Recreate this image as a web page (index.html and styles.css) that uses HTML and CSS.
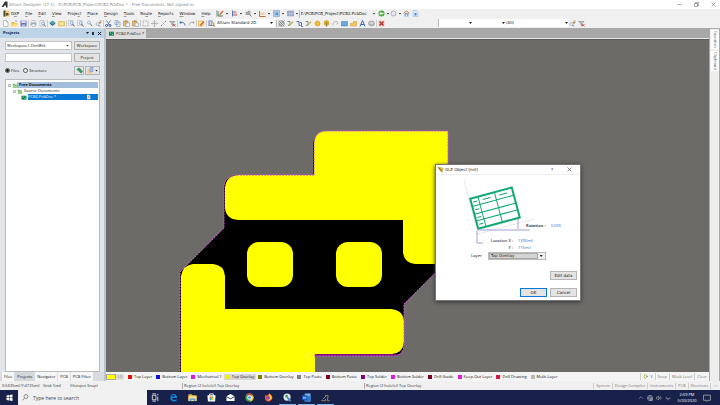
FILE: index.html
```html
<!DOCTYPE html>
<html lang="en">
<head>
<meta charset="utf-8">
<title>Altium Designer (17.1)</title>
<link rel="stylesheet" href="styles.css">
</head>
<body>
<svg class="defs" aria-hidden="true">
  <symbol id="new" viewBox="0 0 14 14"><path d="M3 1h6l3 3v9H3z" fill="#fff" stroke="#8a8f98"/><path d="M9 1v3h3" fill="none" stroke="#8a8f98"/></symbol>
  <symbol id="open" viewBox="0 0 14 14"><path d="M1 4h5l1 2h5v6H1z" fill="#e3b23f"/><path d="M3 7h11l-2 6H1z" fill="#ffdc73"/><path d="M8 3c2-3 4-1 4 1" fill="none" stroke="#4577ad"/></symbol>
  <symbol id="save" viewBox="0 0 14 14"><path d="M1 1h12v12H1z" fill="#6c76c8"/><path d="M3 1h8v5H3z" fill="#dfe5f8"/><path d="M4 9h6v4H4z" fill="#c4c8e6"/></symbol>
  <symbol id="print" viewBox="0 0 14 14"><path d="M4 1h6v5H4z" fill="#fff" stroke="#8d99ab"/><path d="M1 5h12v6H1z" fill="#aab6c6"/><path d="M4 8h6v5H4z" fill="#fff" stroke="#8d99ab"/></symbol>
  <symbol id="preview" viewBox="0 0 14 14"><path d="M2 1h8v11H2z" fill="#fff" stroke="#8d99ab"/><circle cx="8" cy="7" r="3" fill="#d7edff" stroke="#527aa5"/><path d="m10 9 3 4" stroke="#527aa5" stroke-width="2"/></symbol>
  <symbol id="layers" viewBox="0 0 14 14"><path d="m1 7 6-4 6 4-6 5z" fill="#2c6c8c"/><path d="m1 5 6-4 6 4-6 4z" fill="#5ba0a8"/></symbol>
  <symbol id="board" viewBox="0 0 14 14"><path d="M1 3h12v9H1z" fill="#f2d778" stroke="#cfa83c"/><path d="M4 6h6v3H4z" fill="#fff3bb"/></symbol>
  <symbol id="zoom" viewBox="0 0 14 14"><path d="M1 1h9v10H1z" fill="#f9fbff" stroke="#9ca9bb"/><circle cx="7" cy="6" r="3" fill="#d8ecff" stroke="#5b7fa8"/><path d="m9 8 4 5" stroke="#5a6473" stroke-width="2"/></symbol>
  <symbol id="lens" viewBox="0 0 14 14"><circle cx="6" cy="5" r="3" fill="#e4f1ff" stroke="#7289a5"/><path d="m8 7 4 5" stroke="#6b7583" stroke-width="2"/></symbol>
  <symbol id="lensfx" viewBox="0 0 14 14"><circle cx="5" cy="8" r="3" fill="#e4f1ff" stroke="#7289a5"/><path d="m7 10 3 3" stroke="#6b7583" stroke-width="2"/><path d="M8 5h4l-3 3M9 2h4" fill="none" stroke="#ba8a44" stroke-width="2"/></symbol>
  <symbol id="cut" viewBox="0 0 14 14"><path d="m3 1 6 9m2-9L5 10" stroke="#6f8297" stroke-width="2"/><circle cx="3" cy="11" r="2" fill="none" stroke="#2f62b4" stroke-width="2"/><circle cx="10" cy="11" r="2" fill="none" stroke="#2f62b4" stroke-width="2"/></symbol>
  <symbol id="copy" viewBox="0 0 14 14"><path d="M2 1h6v8H2zM5 4h7v9H5z" fill="#e6efff" stroke="#6a83ad"/></symbol>
  <symbol id="paste" viewBox="0 0 14 14"><path d="M1 2h9v10H1z" fill="#e7bd62" stroke="#a98239"/><path d="M4 1h3v2H4z" fill="#777"/><path d="M6 6h7v7H6z" fill="#eef3ff" stroke="#7c8fb3"/></symbol>
  <symbol id="marquee" viewBox="0 0 14 14"><path d="M2 2h10v10H2z" fill="none" stroke="#777" stroke-dasharray="2 1"/></symbol>
  <symbol id="move" viewBox="0 0 14 14"><path d="M7 1v12M1 7h12M5 3l2-2 2 2M5 11l2 2 2-2M3 5 1 7l2 2M11 5l2 2-2 2" fill="none" stroke="#858585"/></symbol>
  <symbol id="deselect" viewBox="0 0 14 14"><path d="m3 3 8 8m0-8-8 8" stroke="#999" stroke-dasharray="3 1"/><path d="M10 2h2v2h-2zM2 10h2v2H2z" fill="#777"/></symbol>
  <symbol id="filter" viewBox="0 0 14 14"><path d="M1 3h11L8 7v5L6 10V7z" fill="#bcc0c6" stroke="#777"/><path d="m8 8 5 5m0-5-5 5" stroke="#c35555" stroke-width="2"/></symbol>
  <symbol id="undo" viewBox="0 0 14 14"><path d="M3 6c4-3 8-1 9 5" fill="none" stroke="#3a6ba9" stroke-width="2"/><path d="m1 7 1-5 5 4z" fill="#3a6ba9"/></symbol>
  <symbol id="redo" viewBox="0 0 14 14"><path d="M11 6C7 3 3 5 2 11" fill="none" stroke="#aaa" stroke-width="2"/><path d="m13 7-1-5-5 4z" fill="#aaa"/></symbol>
  <symbol id="wizard" viewBox="0 0 14 14"><path d="M1 2h9v10H1z" fill="#ffe782" stroke="#d39b2c"/><path d="M3 11 11 2l2 2-8 8z" fill="#d34c35"/></symbol>
  <symbol id="browse" viewBox="0 0 14 14"><path d="M1 1h8v11H1z" fill="#6d86bf"/><path d="M3 3h5v7H3z" fill="#d6dff2"/><circle cx="9" cy="8" r="3" fill="#f5e08c" stroke="#795e3b"/><path d="m11 10 2 3" stroke="#5f5750" stroke-width="2"/></symbol>
  <symbol id="hatch" viewBox="0 0 14 14"><path d="M1 1h12v12H1z" fill="#d5d5d5"/><path d="M1 5 5 1M1 9l8-8M1 13 13 1M5 13l8-8M9 13l4-4M1 1l12 12M1 7l6 6M7 1l6 6" stroke="#6e6e6e"/></symbol>
  <symbol id="route" viewBox="0 0 14 14"><path d="M1 3h5v4L2 12" fill="none" stroke="#888" stroke-width="2"/><path d="m4 11 7-9 2 2-7 8z" fill="#b9b64b"/></symbol>
  <symbol id="diff" viewBox="0 0 14 14"><path d="M1 3h5v8h3M8 5h3v8h3" fill="none" stroke="#5273c0" stroke-width="2"/></symbol>
  <symbol id="pad" viewBox="0 0 14 14"><circle cx="7" cy="7" r="5" fill="#f2be27" stroke="#c98b0b"/></symbol>
  <symbol id="via" viewBox="0 0 14 14"><circle cx="7" cy="6" r="5" fill="#e7b928" stroke="#b98810"/><circle cx="7" cy="6" r="2" fill="#9a7b2d"/><path d="M7 8v5" stroke="#99802f" stroke-width="2"/></symbol>
  <symbol id="arc" viewBox="0 0 14 14"><path d="M2 11C1 2 11 1 12 6l-3 3" fill="none" stroke="#777"/></symbol>
  <symbol id="fill" viewBox="0 0 14 14"><path d="M1 3h12v9H1z" fill="#6ba6de" stroke="#3b79b4"/></symbol>
  <symbol id="poly" viewBox="0 0 14 14"><path d="M1 7h4l2-4h6v9H1z" fill="#efc75d" stroke="#d09a2f"/></symbol>
  <symbol id="letter" viewBox="0 0 14 14"><path d="m2 13 5-12 5 12M4 9h6" fill="none" stroke="#3c62b4" stroke-width="2"/></symbol>
  <symbol id="part" viewBox="0 0 14 14"><ellipse cx="7" cy="7" rx="6" ry="5" fill="#b5b9be" stroke="#888"/><path d="M3 6h8" stroke="#eee" stroke-width="2"/></symbol>
  <symbol id="cross" viewBox="0 0 14 14"><path d="M1 1h12v12H1z" fill="#eac5c3"/><path d="m3 3 8 8m0-8-8 8" stroke="#bd3430" stroke-width="3"/></symbol>
  <symbol id="draw" viewBox="0 0 14 14"><path d="M2 2v10h10" fill="none" stroke="#447d52" stroke-width="2"/><path d="m4 9 7-8 2 2-6 7z" fill="#d46c39"/></symbol>
  <symbol id="align" viewBox="0 0 14 14"><path d="M3 1v12" stroke="#5875b6" stroke-width="2"/><path d="M5 3h5v3H5zM5 8h7v3H5z" fill="#edb9b4" stroke="#bb7576"/></symbol>
  <symbol id="find" viewBox="0 0 14 14"><path d="M2 9V4h3v5M7 9V2h3v7M1 9h10" fill="#bbb" stroke="#777"/><path d="m9 9 4 4" stroke="#777" stroke-width="2"/></symbol>
  <symbol id="dim" viewBox="0 0 14 14"><path d="M1 2v11h12" fill="none" stroke="#b27837" stroke-width="2"/><path d="M3 5h8v5H3z" fill="#f8d395"/></symbol>
  <symbol id="room" viewBox="0 0 14 14"><path d="M1 1h12v12H1z" fill="#a9c5e6" stroke="#7898c4"/><path d="M5 5h5v5H5z" fill="#5f96d7"/></symbol>
  <symbol id="grid" viewBox="0 0 14 14"><path d="M1 2h12v10H1z" fill="#9daacd" stroke="#7d89aa"/><path d="M1 7h12M5 2v10M9 2v10" stroke="#c4cce4"/></symbol>
  <symbol id="back" viewBox="0 0 14 14"><circle cx="7" cy="7" r="6" fill="#4caf36"/><path d="M11 7H4m3-3L4 7l3 3" fill="none" stroke="#fff" stroke-width="2"/></symbol>
  <symbol id="forward" viewBox="0 0 14 14"><circle cx="7" cy="7" r="5" fill="#e5e7ea" stroke="#acb0b6" stroke-width="2"/></symbol>
  <symbol id="home" viewBox="0 0 14 14"><path d="M3 6v7h8V6" fill="#81a9df"/><path d="m1 7 6-5 6 5" fill="none" stroke="#c1743b" stroke-width="2"/><path d="M6 9h2v4H6z" fill="#fff"/></symbol>
  <symbol id="page" viewBox="0 0 14 14"><path d="M2 1h7l3 3v9H2z" fill="#dceafa" stroke="#8eb3dc"/><path d="M5 6h4v5H5z" fill="#4a8bd3"/></symbol>
  <symbol id="app" viewBox="0 0 14 14"><path d="M8 1 1 12h4l2-3h3v4h3V1z" fill="#333"/></symbol>
  <symbol id="dxp" viewBox="0 0 14 14"><path d="M1 1h12v12H1z" fill="#f0d27a"/><path d="M1 1h4v12H1zM6 6h5v5H6z" fill="#574d33"/></symbol>
  <symbol id="folder" viewBox="0 0 14 14"><path d="M1 2h5l1 2h6v9H1z" fill="#6fae63"/><path d="M1 6h12v7H1z" fill="#9bd28d"/></symbol>
  <symbol id="pcb" viewBox="0 0 14 14"><path d="M0 2h14v11H0z" fill="#087b4f"/><path d="M3 4h3v4H3zM9 4h3v2H9zM8 9h4v2H8z" fill="#96d8b7"/></symbol>
</svg>

<div class="app">
  <header class="titlebar">
    <svg class="ico"><use href="#app"/></svg>
    <span class="title">Altium Designer (17.1) - E:\PCB\PCB_Project\PCB2.PcbDoc * - Free Documents. Not signed in.</span>
    <div class="winctl">
      <button aria-label="Minimize"><svg viewBox="0 0 10 10"><path d="M1 5h8"/></svg></button>
      <button aria-label="Restore"><svg viewBox="0 0 10 10"><path d="M1 3h6v6H1zM3 3V1h6v6H7"/></svg></button>
      <button aria-label="Close"><svg viewBox="0 0 10 10"><path d="m1 1 8 8m0-8-8 8"/></svg></button>
    </div>
  </header>

  <nav class="menubar">
    <svg class="ico"><use href="#dxp"/></svg>
    <div class="menus">
      <button>D<u>X</u>P</button><button><u>F</u>ile</button><button><u>E</u>dit</button><button><u>V</u>iew</button><button>Proje<u>c</u>t</button><button><u>P</u>lace</button><button><u>D</u>esign</button><button><u>T</u>ools</button><button>Ro<u>u</u>te</button><button><u>R</u>eports</button><button><u>W</u>indow</button><button><u>H</u>elp</button>
    </div>
    <div class="drops">
      <button aria-label="Drawing tools"><svg class="ico"><use href="#draw"/></svg></button>
      <button aria-label="Align"><svg class="ico"><use href="#align"/></svg></button>
      <button aria-label="Find"><svg class="ico"><use href="#find"/></svg></button>
      <button aria-label="Dimensions"><svg class="ico"><use href="#dim"/></svg></button>
      <button aria-label="Rooms"><svg class="ico"><use href="#room"/></svg></button>
      <button aria-label="Grids"><svg class="ico"><use href="#grid"/></svg></button>
    </div>
    <label class="pick path"><select aria-label="Document path"><option>E:\PCB\PCB_Project\PCB2.PcbDoc</option></select></label>
    <div class="drops history">
      <button aria-label="Back"><svg class="ico"><use href="#back"/></svg></button>
      <button aria-label="Forward"><svg class="ico"><use href="#forward"/></svg></button>
    </div>
    <button class="tool" aria-label="Home"><svg class="ico"><use href="#home"/></svg></button>
    <button class="tool" aria-label="Favorites"><svg class="ico"><use href="#page"/></svg></button>
  </nav>

  <div class="toolbar">
    <div class="group"><button aria-label="New"><svg class="ico"><use href="#new"/></svg></button><button aria-label="Open"><svg class="ico"><use href="#open"/></svg></button><button aria-label="Save"><svg class="ico"><use href="#save"/></svg></button></div>
    <div class="group"><button aria-label="Print"><svg class="ico"><use href="#print"/></svg></button><button aria-label="Preview"><svg class="ico"><use href="#preview"/></svg></button></div>
    <div class="group"><button aria-label="Layers"><svg class="ico"><use href="#layers"/></svg></button><button aria-label="Board"><svg class="ico"><use href="#board"/></svg></button></div>
    <div class="group"><button aria-label="Fit document"><svg class="ico"><use href="#zoom"/></svg></button><button aria-label="Zoom area"><svg class="ico"><use href="#zoom"/></svg></button><button aria-label="Zoom selected"><svg class="ico"><use href="#lens"/></svg></button><button aria-label="Zoom filtered"><svg class="ico"><use href="#lensfx"/></svg></button></div>
    <div class="group"><button aria-label="Cut"><svg class="ico"><use href="#cut"/></svg></button><button aria-label="Copy"><svg class="ico"><use href="#copy"/></svg></button><button aria-label="Paste"><svg class="ico"><use href="#paste"/></svg></button><button aria-label="Rubber stamp"><svg class="ico"><use href="#paste"/></svg></button></div>
    <div class="group"><button aria-label="Select area"><svg class="ico"><use href="#marquee"/></svg></button><button aria-label="Move"><svg class="ico"><use href="#move"/></svg></button><button aria-label="Deselect"><svg class="ico"><use href="#deselect"/></svg></button><button aria-label="Clear filter"><svg class="ico"><use href="#filter"/></svg></button></div>
    <div class="group"><button aria-label="Undo"><svg class="ico"><use href="#undo"/></svg></button><button aria-label="Redo"><svg class="ico"><use href="#redo"/></svg></button></div>
    <div class="group"><button aria-label="Cross probe"><svg class="ico"><use href="#wizard"/></svg></button></div>
    <div class="group"><button aria-label="Browse"><svg class="ico"><use href="#browse"/></svg></button></div>
    <label class="pick view"><select aria-label="View configuration"><option>Altium Standard 2D</option></select></label>
    <div class="group placing"><button aria-label="Hatch"><svg class="ico"><use href="#hatch"/></svg></button><button aria-label="Route"><svg class="ico"><use href="#route"/></svg></button><button aria-label="Differential pair"><svg class="ico"><use href="#diff"/></svg></button><button aria-label="Multi route"><svg class="ico"><use href="#route"/></svg></button><button aria-label="Pad"><svg class="ico"><use href="#pad"/></svg></button><button aria-label="Via"><svg class="ico"><use href="#via"/></svg></button><button aria-label="Arc"><svg class="ico"><use href="#arc"/></svg></button><button aria-label="Fill"><svg class="ico"><use href="#fill"/></svg></button><button aria-label="Polygon"><svg class="ico"><use href="#poly"/></svg></button><button aria-label="String"><svg class="ico"><use href="#letter"/></svg></button><button aria-label="Component"><svg class="ico"><use href="#part"/></svg></button></div>
    <div class="group"><button aria-label="Clear markers"><svg class="ico"><use href="#cross"/></svg></button></div>
    <div class="filters">
      <label class="pick net"><select aria-label="Net"><option></option></select></label>
      <label class="pick net"><select aria-label="Component"><option></option></select></label>
      <label class="pick all"><select aria-label="Filter"><option>(All)</option></select></label>
      <button class="tool" aria-label="Apply filter"><svg class="ico"><use href="#lensfx"/></svg></button>
      <button class="tool" aria-label="Clear filter"><svg class="ico"><use href="#filter"/></svg></button>
    </div>
  </div>

  <main class="work">
    <aside class="side">
      <div class="side-head"><b>Projects</b><i class="tri"></i><i class="pin"></i><svg class="mini" viewBox="0 0 10 10"><path d="m2 2 6 6m0-6-6 6"/></svg></div>
      <div class="side-body">
        <div class="row"><label class="pick field"><select aria-label="Workspace file"><option>Workspace1.DsnWrk</option></select></label><button class="btn">Workspace</button></div>
        <div class="row"><input class="field" type="text" aria-label="Project"><button class="btn">Project</button></div>
        <div class="row modes">
          <label><input type="radio" name="mode" checked>Files</label>
          <label><input type="radio" name="mode">Structure</label>
          <span class="modebtns"><button class="btn small" aria-label="Refresh"><svg class="ico" viewBox="0 0 14 14"><path d="m1 5 5-4 4 4-4 4zM6 9l4-4 4 4-4 4z" fill="#37966c"/></svg></button><button class="btn small wide" aria-label="Options"><svg class="ico" viewBox="0 0 14 14"><path d="M1 4h9v9H1z" fill="#f3c486"/><path d="M6 1h6v8H6z" fill="#a6bfe8" stroke="#6d8ac2"/></svg><i class="tri"></i></button></span>
        </div>
        <ul class="tree">
          <li class="node root"><i class="box"></i><svg class="ico"><use href="#folder"/></svg><b>Free Documents</b></li>
          <li class="node sub"><i class="box"></i><svg class="ico"><use href="#folder"/></svg>Source Documents</li>
          <li class="node doc"><svg class="ico"><use href="#pcb"/></svg><span class="sel">PCB2.PcbDoc *<svg class="ico" viewBox="0 0 14 14"><path d="M3 1h6l3 3v9H3z" fill="#fff"/><path d="M5 6h5M5 9h5" stroke="#e05b5b" stroke-width="2"/></svg></span></li>
        </ul>
      </div>
      <div class="side-tabs"><button>Files</button><button class="on">Projects</button><button>Navigator</button><button>PCB</button><button>PCB Filter</button></div>
    </aside>

    <section class="editor">
      <div class="doctabs"><button><svg class="ico"><use href="#pcb"/></svg>PCB2.PcbDoc *</button></div>
      <div class="canvas">
        <svg viewBox="106 40 603 332" preserveAspectRatio="xMinYMin slice" role="img" aria-label="PCB layout">
          <path d="M326 131h122v142h-13l-31 31v42q-1 9-11 10h-79v20H180V272l44-44v-41q1-9 11-12h78v-32q2-9 13-12"/>
          <path d="M315 354h84l-7 2h-77z" fill="#7a127a"/>
          <g fill="#ff0">
            <path d="M448 131H326q-11 0-12 12v32h-76q-12 1-13 13v20q1 11 13 12h165v32q1 11 12 12h33z"/>
            <rect x="247" y="242" width="46" height="45" rx="12"/>
            <rect x="336" y="242" width="46" height="45" rx="12"/>
            <path d="M181 376V276q2-11 12-12h20q11 1 12 12v33h166q12 1 13 12v21q-1 11-12 12h-77v22z"/>
          </g>
          <path class="outline" d="M314 175h-78q-12 2-12 12v41l-44 44v104M314 175v-32q1-11 12-12h122v134M435 273l-31 31v41q-1 11-12 11h-78"/>
        </svg>
      </div>
      <div class="layers">
        <i class="cur"></i><span class="ls">LS</span>
        <button class="l-red">Top Layer</button><button class="l-blue">Bottom Layer</button><button class="l-mag">Mechanical 1</button><button class="l-yel on">Top Overlay</button><button class="l-olive">Bottom Overlay</button><button class="l-gray">Top Paste</button><button class="l-maroon">Bottom Paste</button><button class="l-purple">Top Solder</button><button class="l-mag">Bottom Solder</button><button class="l-maroon">Drill Guide</button><button class="l-mag">Keep-Out Layer</button><button class="l-crim">Drill Drawing</button><button class="l-silver">Multi-Layer</button>
        <span class="masks"><button class="hl"><svg class="ico" viewBox="0 0 14 14"><path d="M5 2 2 7l3 5" fill="none" stroke="#c9b52a" stroke-width="2"/><path d="m7 4 3 3-3 3z" fill="#3c9d52"/></svg>V</button><button>Snap</button><button>Mask Level</button><button>Clear</button></span>
      </div>
    </section>

    <aside class="rail"><button>Favorites</button><button>Clipboard</button></aside>
  </main>

  <footer class="status">
    <span class="coords">X:5635mil Y:4725mil</span><span class="gridinfo">Grid: 5mil</span><span class="snapinfo">(Hotspot Snap)</span>
    <span class="cell">Region (2 hole(s)) Top Overlay</span><span class="cell second">Region (2 hole(s)) Top Overlay</span>
    <nav class="panels"><button>System</button><button>Design Compiler</button><button>Instruments</button><button>PCB</button><button>Shortcuts</button><button>&gt;&gt;</button></nav>
  </footer>

  <footer class="taskbar">
    <button class="start" aria-label="Start"><svg viewBox="0 0 14 14"><path d="m1 3 5-1v5H1zM7 2l6-1v6H7zM1 8h5v5l-5-1zM7 8h6v6l-6-1z" fill="#fff"/></svg></button>
    <label class="search"><svg viewBox="0 0 14 14"><circle cx="8" cy="5" r="4"/><path d="m5 8-4 5"/></svg><input type="text" placeholder="Type here to search" aria-label="Search"></label>
    <div class="apps">
      <button aria-label="Task view"><svg viewBox="0 0 20 20"><path d="M3 5h8v10H3zM3 2h8M3 18h8M15 2v3M15 8v10" fill="none" stroke="#ddd" stroke-width="2"/></svg></button>
      <button aria-label="Edge"><svg viewBox="0 0 20 20"><path d="M2 9C4 0 18-1 18 11H7c1 6 6 5 10 3v4C9 21 2 17 3 10c0 0 2-4 6-5-2 1-2 3-2 3h6C13 3 5 3 2 9z" fill="#1586e0"/></svg></button>
      <button aria-label="Explorer"><svg viewBox="0 0 20 20"><path d="M1 3h7l2 2h9v13H1z" fill="#e7b63f"/><path d="M1 7h18v11H1z" fill="#ffe08a"/><path d="M4 12h12v6h-3v-3H7v3H4z" fill="#4795cf"/></svg></button>
      <button aria-label="Store"><svg viewBox="0 0 20 20"><path d="M6 6V2h8v4" fill="none" stroke="#fff" stroke-width="2"/><path d="M1 5h18l-1 14H2z" fill="#fff"/><path d="M6 8h4v4H6z" fill="#f05022"/><path d="M10 8h4v4h-4z" fill="#7fb900"/><path d="M6 12h4v4H6z" fill="#00a3ee"/><path d="M10 12h4v4h-4z" fill="#ffb800"/></svg></button>
      <button aria-label="Mail"><svg viewBox="0 0 20 20"><path d="m1 7 9-5 9 5v11H1z" fill="#fff"/><path d="m1 8 9 5 9-5" fill="none" stroke="#18204a" stroke-width="2"/></svg></button>
      <button aria-label="Chrome"><svg viewBox="0 0 20 20"><circle cx="10" cy="10" r="9" fill="#3fa652"/><path d="M2 5a9 9 0 0 1 16 1h-8z" fill="#dd4b3e"/><path d="M10 6h8c3 6-1 13-8 13l4-7z" fill="#f9cc40"/><circle cx="10" cy="10" r="5" fill="#fff"/><circle cx="10" cy="10" r="3" fill="#4285f4"/></svg></button>
      <button aria-label="Firefox"><svg viewBox="0 0 20 20"><path d="M3 4 6 6l6-5c5 3 8 8 6 12-4 9-16 7-16-2z" fill="#ff5a2a"/><path d="M11 1c5 3 8 8 6 12-2 3-7 5-10 2 5 0 7-4 5-7z" fill="#ffc93c"/><circle cx="9" cy="11" r="4" fill="#8950b8"/></svg></button>
      <button class="run" aria-label="Paint tool"><svg viewBox="0 0 20 20"><circle cx="9" cy="9" r="8" fill="#e0e7ed"/><circle cx="8" cy="7" r="3" fill="#4f9d61"/><path d="m9 9 8 9" stroke="#4a89c7" stroke-width="4"/></svg></button>
      <button class="run" aria-label="Word"><svg viewBox="0 0 20 20"><path d="M6 1h13v18H6z" fill="#74b1ef"/><path d="M6 7h13v12H6z" fill="#2b7cd3"/><path d="M0 5h12v11H0z" fill="#185abd"/><path d="m3 8 1 5 2-4 2 4 1-5" fill="none" stroke="#fff"/></svg></button>
      <button class="run" aria-label="Altium"><svg viewBox="0 0 20 20"><path d="M1 17h9v-4M9 6h7l-2 11h5M4 14l8-8" fill="none" stroke="#a58a62" stroke-width="2"/></svg></button>
    </div>
    <div class="tray">
      <svg viewBox="0 0 14 14"><path d="m2 9 5-5 5 5"/></svg>
      <svg viewBox="0 0 14 14"><circle cx="7" cy="7" r="6"/><path d="M1 7h12M7 1c-4 4-4 8 0 12 4-4 4-8 0-12M8 9h5v4H8z"/></svg>
      <svg viewBox="0 0 14 14"><path d="M1 5h2l3-3v10L3 9H1zM8 5q2 2 0 4M10 3q4 4 0 8"/></svg>
      <svg class="lang" viewBox="0 0 14 14"><path d="M3 4v4h9V6M5 11h4"/></svg>
      <time>2:09 PM<br>5/20/2020</time>
      <svg class="note" viewBox="0 0 14 14"><path d="M1 2h12v9H9l-2 2v-2H1z"/></svg>
    </div>
  </footer>
</div>

<div class="dialog" role="dialog" aria-label="OLE Object [mil]">
  <div class="dlg-head"><svg class="ico" viewBox="0 0 14 14"><path d="M1 2h5l7 2-2 9-5-3z" fill="#e1b93e"/><path d="m3 3 7 8" stroke="#6f6534" stroke-width="2"/></svg><span>OLE Object [mil]</span><button aria-label="Help">?</button><button aria-label="Close"><svg viewBox="0 0 10 10"><path d="m1 1 8 8m0-8-8 8"/></svg></button></div>
  <div class="dlg-body">
    <div class="figure">
      <svg viewBox="0 0 72 68" aria-hidden="true">
        <path d="m0 0 14 54M14 54l56-15" fill="none" stroke="#ddd" stroke-dasharray="2 1"/>
        <g transform="translate(5 18) rotate(-15)" fill="none" stroke="#14a874">
          <path d="M1 1h43v31H1z" stroke-width="2"/>
          <path d="M9 1v31M26 1v31M1 9h43M1 17h43M1 24h43"/>
          <path d="M13 5h8M30 5h8M3 5h4M3 13h4M3 21h4M3 28h4"/>
        </g>
        <path d="M14 50h52M13 51v12h6M54 49V39" fill="none" stroke="#a4a0d0"/>
      </svg>
      <label class="rot"><b>Rotation :</b><input value="0.000"></label>
    </div>
    <div class="coordsform">
      <label for="locx">Location X :</label><input id="locx" value="1390mil">
      <label for="locy">Y :</label><input id="locy" value="715mil">
    </div>
    <div class="layerrow"><label for="layer">Layer</label><span class="pick layerpick"><select id="layer"><option>Top Overlay</option></select></span></div>
    <div class="actions"><button class="btn">Edit data</button></div>
    <div class="actions"><button class="btn ok">OK</button><button class="btn">Cancel</button></div>
  </div>
</div>
</body>
</html>
```
FILE: styles.css
```css
* { box-sizing: border-box; }
body { margin: 0; font: 4px/6px "Open Sans", "Noto Sans", sans-serif; color: #111; background: #f0f0f0; }
button, input, select { font: inherit; color: inherit; margin: 0; padding: 0; border: 0; background: none; border-radius: 0; outline: 0; }
button { display: inline-flex; align-items: center; justify-content: center; white-space: nowrap; }
select { appearance: none; width: 100%; height: 100%; padding-left: 1px; }
.defs { display: none; }
.ico { width: 7px; height: 7px; flex: none; display: block; }
.app { height: 100vh; display: flex; flex-direction: column; }
.titlebar, .menubar, .toolbar, .dlg-head, .dialog .btn, .layerpick { font-family: "DejaVu Sans", "Open Sans", sans-serif; }

.titlebar { display: flex; align-items: center; gap: 1px; height: 9px; padding: 0 4px 0 1px; background: #fff; color: #888; flex: none; }
.title { white-space: nowrap; }
.winctl { margin-left: auto; display: flex; gap: 12px; }
.winctl svg { width: 5px; height: 5px; fill: none; stroke: #555; }

.menubar { display: flex; align-items: center; height: 9px; padding-left: 3px; flex: none; }
.menus { display: flex; gap: 6px; padding: 0 5px 0 1px; }
.menus u { text-decoration-color: #999; }
.drops { display: flex; gap: 2px; border-left: 1px solid #bbb; }
.drops button { width: 12px; justify-content: flex-start; }
.drops button::after, .pick::after, .tri { content: ""; width: 3px; height: 2px; background: #222; clip-path: polygon(0 0, 100% 0, 50% 100%); flex: none; }
.drops button::after { margin-left: 2px; }
.pick { display: flex; align-items: center; height: 8px; }
.path { width: 77px; border-left: 1px solid #bbb; margin-right: 2px; }
.history { border: 0; gap: 0; }
.tool { width: 9px; }

.toolbar { display: flex; align-items: center; height: 10px; padding-left: 1px; flex: none; }
.group { display: flex; gap: 2px; padding: 0 1px; }
.group + .group { border-left: 1px solid #ccc; }
.view { width: 59px; background: #fff; padding-right: 2px; margin-right: 1px; }
.placing { border-left: 1px solid #bbb; }
.filters { display: flex; margin-left: 52px; border-left: 1px solid #bbb; }
.net { width: 33px; background: #fff; }
.all { width: 63px; background: #fff; }

.work { flex: 1; min-height: 0; display: flex; background: #a8a8a8; }
.side { width: 106px; display: flex; flex-direction: column; background: #e2e6ea; border-right: 2px solid #bcc5ce; flex: none; }
.side-head { display: flex; align-items: center; gap: 3px; height: 10px; padding: 0 2px 0 3px; background: #bdd3e6; }
.side-head b { margin-right: auto; color: #123; }
.pin { width: 2px; height: 3px; background: #234; }
.mini { width: 5px; height: 5px; stroke: #123; stroke-width: 2; }
.side-body { flex: 1; display: flex; flex-direction: column; gap: 3px; padding: 3px 4px 0 5px; min-height: 0; }
.row { display: flex; gap: 2px; height: 9px; align-items: center; flex: none; }
.field { flex: 1; min-width: 0; height: 9px; background: #fff; border: 1px solid #c3c3c3; }
.side .pick { padding-right: 2px; }
.btn { width: 26px; height: 9px; background: #e4e4e4; border: 1px solid #b4b4b4; }
.modes { gap: 4px; margin: 1px 0; }
.modes label { display: flex; align-items: center; gap: 1px; }
input[type=radio] { appearance: none; width: 5px; height: 5px; border: 1px solid #555; border-radius: 50%; background: #fff; }
input[type=radio]:checked { background: radial-gradient(#222 1px, #fff 2px); }
.modebtns { margin-left: auto; display: flex; gap: 1px; }
.small { width: 10px; }
.wide { width: 15px; gap: 1px; }
.tree { list-style: none; margin: 0; padding: 2px 1px; flex: 1; background: #fff; border: 1px solid #bbb; }
.node { display: flex; align-items: center; height: 6px; gap: 1px; }
.root { padding-left: 1px; background: linear-gradient(90deg, #fff 10px, #a2bedc 10px); }
.sub { padding-left: 6px; }
.doc { padding-left: 14px; }
.box { width: 3px; height: 3px; border: 1px solid #bbb; }
.node > .ico { width: 6px; height: 5px; }
.sel { flex: 1; display: flex; justify-content: space-between; padding-right: 7px; background: #0a78d7; color: #fff; }
.sel .ico { width: 5px; height: 6px; }
.side-tabs { display: flex; height: 9px; padding-left: 2px; gap: 1px; background: #d8dcdf; }
.side-tabs button { background: #f6f6f6; padding: 0 2px; }
.side-tabs .on { background: #d5d7da; }

.editor { flex: 1; min-width: 0; display: flex; flex-direction: column; }
.doctabs { height: 11px; display: flex; align-items: flex-end; border-bottom: 1px solid #e4e4e4; flex: none; }
.doctabs button { height: 9px; background: #dcdcdc; gap: 1px; padding: 0 2px; }
.doctabs .ico { height: 5px; }
.canvas { flex: 1; min-height: 0; background: #6d6b68; border-top: 1px solid #5d5d5d; }
.canvas svg { width: 100%; height: 100%; display: block; }
.outline { fill: none; stroke: #d050d8; stroke-dasharray: 2 1; }
.layers { display: flex; align-items: center; height: 9px; background: #f4f4f4; flex: none; overflow: hidden; }
.cur { width: 10px; height: 6px; background: #ff0; border: 1px solid #aaa; }
.ls { width: 8px; text-align: center; color: #888; margin-right: 2px; background: #ddd; }
.layers > button { gap: 2px; padding: 0 2px; flex: none; }
.layers > button::before { content: ""; width: 4px; height: 4px; background: var(--c); }
.layers > .on { background: #d8d8d8; }
.l-red { --c: #e01010; } .l-blue { --c: #1010e0; } .l-mag { --c: #e01ae0; } .l-yel { --c: #f2f200; }
.l-olive { --c: #808000; } .l-gray { --c: #808080; } .l-maroon { --c: #800020; } .l-purple { --c: #800080; }
.l-crim { --c: #e0104c; } .l-silver { --c: #b8b8b8; }
.masks { margin-left: auto; display: flex; color: #777; }
.masks button { padding: 0 2px; border-left: 1px solid #ccc; }
.masks .hl { color: #3d79c0; }
.rail { width: 11px; background: #eee; border: solid #aaa; border-width: 1px 1px 0; display: flex; flex-direction: column; align-items: center; padding-top: 1px; gap: 2px; flex: none; }
.rail button { writing-mode: vertical-rl; background: #fff; color: #555; width: 8px; padding: 1px 0; }

.status { display: flex; align-items: center; height: 9px; padding-left: 2px; white-space: nowrap; color: #333; flex: none; }
.coords { width: 41px; }
.gridinfo { width: 27px; }
.snapinfo { width: 112px; }
.cell { width: 182px; padding-left: 1px; border-left: 1px solid #aaa; }
.second { flex: 1; }
.panels { display: flex; color: #777; }
.panels button { border-left: 1px solid #ccc; padding: 0 2px; }

.taskbar { display: flex; height: 15px; background: #182149; flex: none; }
.start { width: 18px; }
.start svg { width: 7px; height: 7px; }
.search { width: 129px; background: #f1f1f1; display: flex; align-items: center; gap: 4px; padding-left: 4px; }
.search svg { width: 7px; height: 7px; fill: none; stroke: #333; }
.search input { flex: 1; min-width: 0; font-size: 5px; }
.search input::placeholder { color: #444; }
.apps { display: flex; gap: 2px; }
.apps button { width: 16px; border-bottom: 1px solid transparent; }
.apps button + button { width: 17px; }
.apps .run { border-bottom-color: #76b9ed; }
.apps svg { width: 9px; height: 9px; }
.tray { margin-left: auto; display: flex; align-items: center; gap: 3px; color: #fff; padding-right: 9px; text-align: center; }
.tray svg { width: 6px; height: 6px; fill: none; stroke: #ddd; }
.tray time { width: 26px; }
.tray .note { width: 8px; height: 8px; }

.dialog { position: absolute; left: 435px; top: 164px; width: 146px; background: #fff; border: 1px solid #777; box-shadow: 0 1px 4px #333; }
.dlg-head { display: flex; align-items: center; height: 9px; gap: 1px; padding: 0 3px 0 1px; }
.dlg-head span { flex: 1; }
.dlg-head button { width: 16px; }
.dlg-head svg:not(.ico) { width: 5px; height: 5px; stroke: #222; }
.dlg-body { border-top: 1px solid #eee; padding: 4px 3px 2px; }
.figure { display: flex; align-items: flex-end; padding-left: 25px; height: 58px; }
.figure svg { width: 72px; height: 68px; margin: 0 -10px -11px 0; flex: none; }
.figure label { display: flex; gap: 5px; color: #444; padding-bottom: 8px; }
.figure input, .coordsform input { width: 20px; height: 6px; color: #1f6ed0; }
.coordsform { display: grid; grid-template-columns: 74px 20px; column-gap: 5px; line-height: 7px; font-weight: 600; color: #444; text-align: right; }
.coordsform input { font-weight: 400; }
.layerrow { display: flex; align-items: center; gap: 6px; padding: 1px 0 0 32px; margin-bottom: 11px; color: #444; font-weight: 600; }
.layerrow select { background: #d4d4d4; border: 1px solid #aaa; font-weight: 400; color: #222; line-height: 4px; }
.layerpick { width: 58px; height: 8px; background: #eee; border: 1px solid #bbb; padding-right: 2px; gap: 2px; }
.actions { display: flex; justify-content: flex-end; gap: 3px; margin-bottom: 8px; }
.actions:last-child { margin-bottom: 1px; }
.dialog .btn { width: 27px; }
.dialog .ok { border-color: #0a78d7; }
```
